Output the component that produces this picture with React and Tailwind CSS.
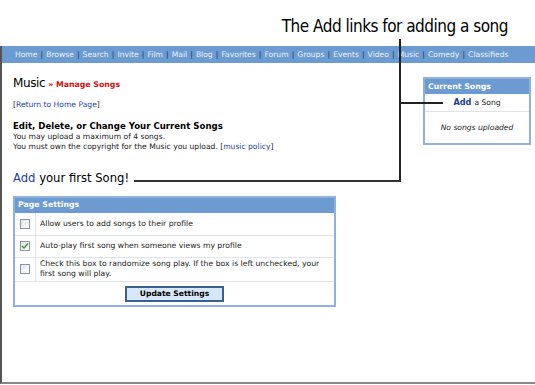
import React from 'react';

const navItems = ['Home', 'Browse', 'Search', 'Invite', 'Film', 'Mail', 'Blog', 'Favorites', 'Forum', 'Groups', 'Events', 'Video', 'Music', 'Comedy', 'Classifieds'];

const verdana = { fontFamily: '"DejaVu Sans", Verdana, sans-serif' };

function Check({ checked }) {
  return (
    <span className="w-[10px] h-[10px] border border-[#8a96a8] bg-gradient-to-br from-[#e1e4e9] to-white flex items-center justify-center">
      {checked && (
        <svg width="8" height="8" viewBox="0 0 8 8">
          <path d="M1 4 L3 6 L7 1.5" stroke="#2f9a2f" strokeWidth="1.4" fill="none" />
        </svg>
      )}
    </span>
  );
}

function SettingRow({ checked, h, first, children }) {
  return (
    <div className={`flex ${h} ${first ? '' : 'border-t border-[#dfe3ea]'}`}>
      <div className="w-[21px] shrink-0 flex items-center justify-center border-r border-[#dfe3ea]">
        <Check checked={checked} />
      </div>
      <div className="px-[4px] flex items-center text-[7.7px] leading-[10px] text-[#222]">{children}</div>
    </div>
  );
}

export default function App() {
  return (
    <div className="w-[535px] h-[385px] bg-white relative overflow-hidden" style={verdana}>
      {/* caption over the screenshot */}
      <div className="h-[46px] flex justify-end items-start pr-[27px] pt-[17px]">
        <span className="text-[17px] leading-[18px] tracking-[-0.5px] text-black" style={{ fontFamily: '"Liberation Sans Narrow", "DejaVu Sans Condensed", sans-serif', fontStretch: 'condensed' }}>
          The Add links for adding a song
        </span>
      </div>

      {/* screenshot frame */}
      <div className="h-[338px] border-l-2 border-b-2 border-l-[#555] border-b-[#888]">
        <div className="h-[17px] bg-[#6b9bd0] flex items-center pl-[13px] text-[7.6px] text-[#eef3fa]">
          {navItems.map((n, i) => (
            <span key={n} className="flex items-center">
              {i > 0 && <span className="mx-[3.1px] text-[#16305a]">|</span>}
              <span>{n}</span>
            </span>
          ))}
        </div>

        <div className="flex">
          {/* left column */}
          <div className="w-[334px] pl-[11px] pt-[11px]">
            <div className="flex items-baseline">
              <span className="text-[12px] text-black tracking-[-0.4px]">Music</span>
              <span className="ml-[3px] text-[7.8px] font-bold text-[#cc1111]">» Manage Songs</span>
            </div>
            <div className="mt-[8px] text-[7.6px] leading-[10px] text-[#222]">
              [<span className="text-[#2447a8]">Return to Home Page</span>]
            </div>
            <div className="mt-[11px] text-[8.6px] font-bold text-black leading-[11px]">Edit, Delete, or Change Your Current Songs</div>
            <div className="text-[7.6px] leading-[9.5px] text-[#222]">You may upload a maximum of 4 songs.</div>
            <div className="text-[7.6px] leading-[10px] text-[#222]">
              You must own the copyright for the Music you upload. [<span className="text-[#2447a8]">music policy</span>]
            </div>
            <div className="mt-[19px] text-[11.6px] leading-[14px] text-black">
              <span className="text-[#1f3f94]">Add</span> your first Song!
            </div>

            <div className="mt-[11px] border-2 border-[#8fb2dc] w-[323px]">
              <div className="h-[15px] bg-[#6b9bd0] text-white font-bold text-[7.8px] flex items-center pl-[3px]">Page Settings</div>
              <div className="bg-white">
                <SettingRow first h="h-[22px]">Allow users to add songs to their profile</SettingRow>
                <SettingRow checked h="h-[22px]">Auto-play first song when someone views my profile</SettingRow>
                <SettingRow h="h-[24px]">
                  Check this box to randomize song play. If the box is left unchecked, your first song will play.
                </SettingRow>
                <div className="flex justify-center border-t border-[#dfe3ea] h-[24px] pt-[4px]">
                  <button className="w-[99px] h-[16px] bg-[#d8e7fa] border-2 border-[#3d5f8f] text-[7.6px] font-bold text-black leading-none">Update Settings</button>
                </div>
              </div>
            </div>
          </div>

          {/* right column */}
          <div className="pl-[87px] pt-[14px]">
            <div className="w-[108px] border-2 border-[#8fb2dc]">
              <div className="h-[15px] bg-[#6b9bd0] text-white font-bold text-[7.8px] flex items-center pl-[3px]">Current Songs</div>
              <div className="h-[18px] flex items-center justify-center text-[7.6px] text-[#222] border-b border-[#dfe3ea]">
                <span className="font-bold text-[8.2px] text-[#1f3f94] mr-[3px]">Add</span>a Song
              </div>
              <div className="h-[31px] flex items-center justify-center italic text-[7.6px] text-[#222]">No songs uploaded</div>
            </div>
          </div>
        </div>
      </div>

      {/* callout lines */}
      <div className="absolute left-[399px] top-[39px] w-[1.5px] h-[142px] bg-[#222]" />
      <div className="absolute left-[400px] top-[102px] w-[43px] h-[1.5px] bg-[#222]" />
      <div className="absolute left-[134px] top-[180px] w-[267px] h-[1.5px] bg-[#333]" />
    </div>
  );
}
